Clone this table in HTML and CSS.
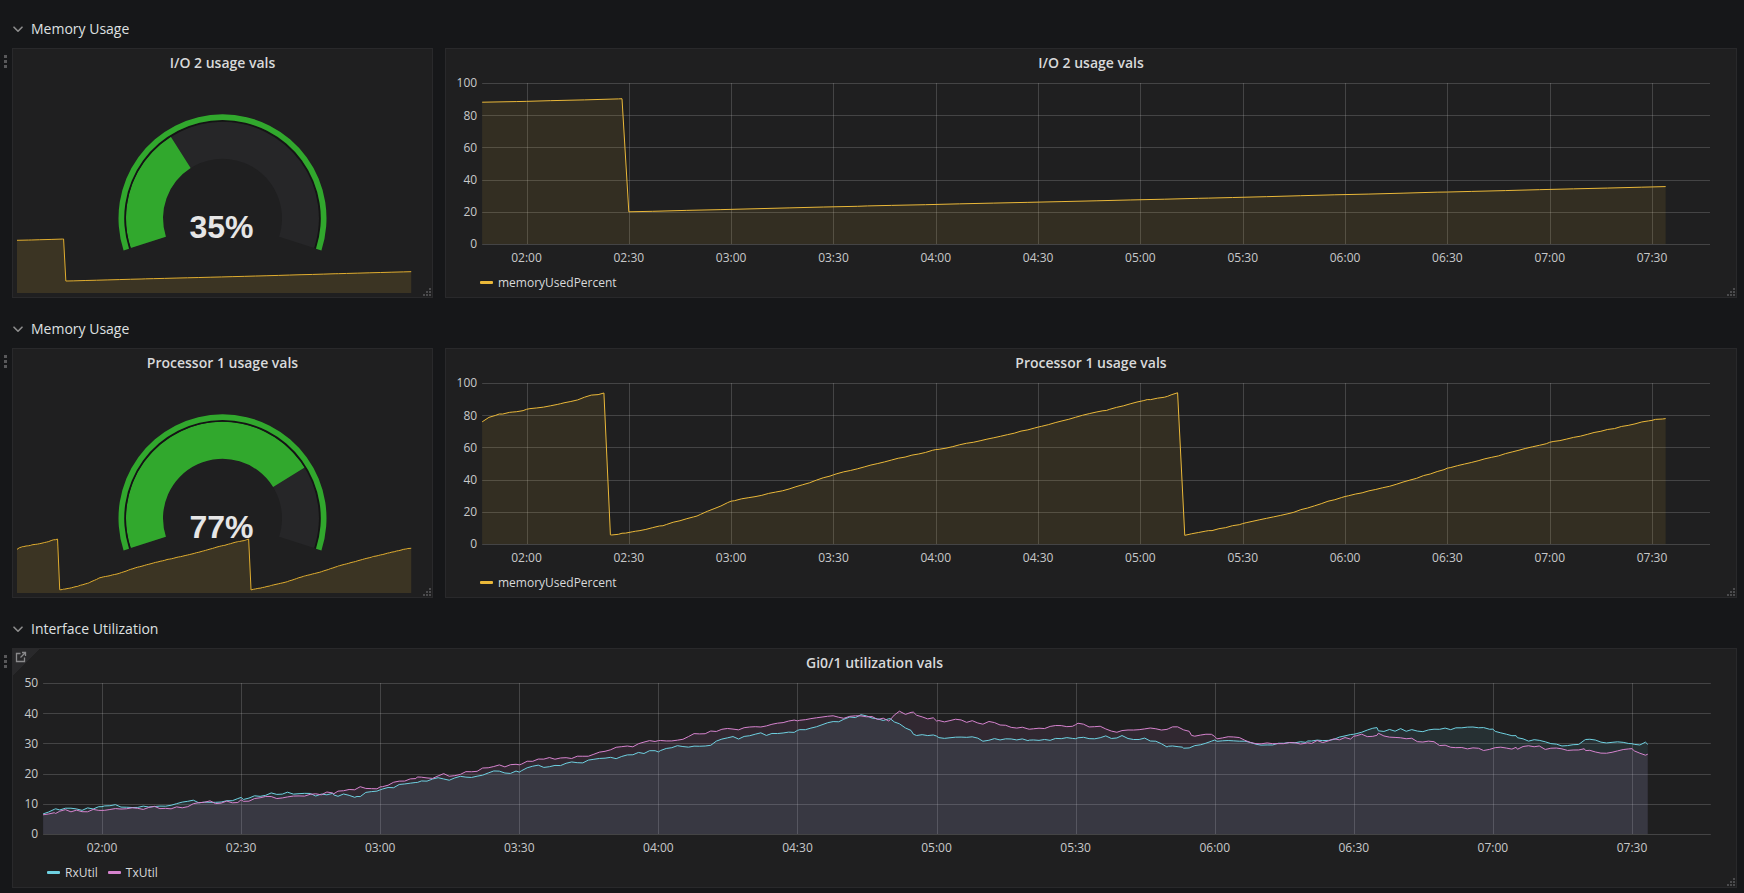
FILE: index.html
```html
<!DOCTYPE html>
<html lang="en">
<head>
<meta charset="utf-8">
<title>Dashboard</title>
<link rel="stylesheet" href="styles.css">
</head>
<body>
<main class="dash">
  <section class="row">
    <header class="row-head">
      <svg class="chev" viewBox="0 0 10 7" width="10" height="7"><path d="M1 1.2 L5 5.2 L9 1.2"/></svg>
      <span class="row-title">Memory Usage</span>
    </header>
    <div class="row-grid">
      <article class="panel stat">
        <span class="drag"><i></i><i></i><i></i></span>
        <h2 class="panel-title">I/O 2 usage vals</h2>
        <div class="stat-body">
          <svg class="spark" data-series="io"></svg>
          <svg class="gauge" data-value="0.35" data-label="35%"></svg>
        </div>
        <span class="resize"><svg viewBox="0 0 8 8" width="8" height="8"><rect x="6" y="0" width="2" height="2"/><rect x="3" y="3" width="2" height="2"/><rect x="6" y="3" width="2" height="2"/><rect x="0" y="6" width="2" height="2"/><rect x="3" y="6" width="2" height="2"/><rect x="6" y="6" width="2" height="2"/></svg></span>
      </article>
      <article class="panel graph">
        <h2 class="panel-title">I/O 2 usage vals</h2>
        <div class="plot-wrap"><svg class="plot" data-graph="io"></svg></div>
        <div class="legend">
          <span class="legend-item"><i class="swatch sw-yellow"></i>memoryUsedPercent</span>
        </div>
        <span class="resize"><svg viewBox="0 0 8 8" width="8" height="8"><rect x="6" y="0" width="2" height="2"/><rect x="3" y="3" width="2" height="2"/><rect x="6" y="3" width="2" height="2"/><rect x="0" y="6" width="2" height="2"/><rect x="3" y="6" width="2" height="2"/><rect x="6" y="6" width="2" height="2"/></svg></span>
      </article>
    </div>
  </section>

  <section class="row">
    <header class="row-head">
      <svg class="chev" viewBox="0 0 10 7" width="10" height="7"><path d="M1 1.2 L5 5.2 L9 1.2"/></svg>
      <span class="row-title">Memory Usage</span>
    </header>
    <div class="row-grid">
      <article class="panel stat">
        <span class="drag"><i></i><i></i><i></i></span>
        <h2 class="panel-title">Processor 1 usage vals</h2>
        <div class="stat-body">
          <svg class="spark" data-series="cpu"></svg>
          <svg class="gauge" data-value="0.77" data-label="77%"></svg>
        </div>
        <span class="resize"><svg viewBox="0 0 8 8" width="8" height="8"><rect x="6" y="0" width="2" height="2"/><rect x="3" y="3" width="2" height="2"/><rect x="6" y="3" width="2" height="2"/><rect x="0" y="6" width="2" height="2"/><rect x="3" y="6" width="2" height="2"/><rect x="6" y="6" width="2" height="2"/></svg></span>
      </article>
      <article class="panel graph">
        <h2 class="panel-title">Processor 1 usage vals</h2>
        <div class="plot-wrap"><svg class="plot" data-graph="cpu"></svg></div>
        <div class="legend">
          <span class="legend-item"><i class="swatch sw-yellow"></i>memoryUsedPercent</span>
        </div>
        <span class="resize"><svg viewBox="0 0 8 8" width="8" height="8"><rect x="6" y="0" width="2" height="2"/><rect x="3" y="3" width="2" height="2"/><rect x="6" y="3" width="2" height="2"/><rect x="0" y="6" width="2" height="2"/><rect x="3" y="6" width="2" height="2"/><rect x="6" y="6" width="2" height="2"/></svg></span>
      </article>
    </div>
  </section>

  <section class="row">
    <header class="row-head">
      <svg class="chev" viewBox="0 0 10 7" width="10" height="7"><path d="M1 1.2 L5 5.2 L9 1.2"/></svg>
      <span class="row-title">Interface Utilization</span>
    </header>
    <div class="row-wide">
      <article class="panel graph wide">
        <span class="drag"><i></i><i></i><i></i></span>
        <span class="corner">
          <svg class="ext" viewBox="0 0 12 12" width="12" height="12"><path d="M5.5 2.5 H1.5 V10.5 H9.5 V6.5"/><path d="M5.5 6.5 L10.5 1.5 M7 1.5 H10.5 V5"/></svg>
        </span>
        <h2 class="panel-title">Gi0/1 utilization vals</h2>
        <div class="plot-wrap"><svg class="plot" data-graph="net"></svg></div>
        <div class="legend">
          <span class="legend-item"><i class="swatch sw-cyan"></i>RxUtil</span>
          <span class="legend-item"><i class="swatch sw-pink"></i>TxUtil</span>
        </div>
        <span class="resize"><svg viewBox="0 0 8 8" width="8" height="8"><rect x="6" y="0" width="2" height="2"/><rect x="3" y="3" width="2" height="2"/><rect x="6" y="3" width="2" height="2"/><rect x="0" y="6" width="2" height="2"/><rect x="3" y="6" width="2" height="2"/><rect x="6" y="6" width="2" height="2"/></svg></span>
      </article>
    </div>
  </section>
</main>
<script src="script.js"></script>
</body>
</html>
```

FILE: styles.css
```css
* { box-sizing: border-box; margin: 0; padding: 0; }

html, body {
  background: #161719;
}

body {
  width: 1744px;
  height: 893px;
  overflow: hidden;
  font-family: "Open Sans", "Liberation Sans", sans-serif;
  color: #d8d9da;
}

.dash {
  display: flex;
  flex-direction: column;
  gap: 12px;
  padding: 10px 7px 0 12px;
}

.row-head {
  height: 38px;
  display: flex;
  align-items: center;
  gap: 8px;
  padding-left: 1px;
}

.chev {
  fill: none;
  stroke: #8e8e8e;
  stroke-width: 1.6;
  stroke-linecap: round;
  stroke-linejoin: round;
}

.row-title {
  font-size: 14px;
  color: #dfe0e1;
  line-height: 1;
}

.row-grid {
  display: grid;
  grid-template-columns: 421px 1fr;
  gap: 12px;
  height: 250px;
}

.row-wide {
  display: flex;
  height: 240px;
}

.panel {
  position: relative;
  display: flex;
  flex-direction: column;
  background: #1f1f20;
  border: 1px solid #29292b;
}

.row-wide .panel {
  flex: 1;
}

.panel-title {
  height: 20px;
  line-height: 28px;
  text-align: center;
  font-size: 14px;
  font-weight: 600;
  color: #d8d9da;
}

.stat-body {
  position: relative;
  flex: 1;
  margin-top: 8px;
}

.stat-body svg {
  position: absolute;
  left: 0;
  top: 0;
  width: 100%;
  height: 100%;
}

.plot-wrap {
  flex: none;
  height: 200px;
}

.wide .plot-wrap {
  height: 190px;
}

.plot {
  display: block;
  width: 100%;
  height: 100%;
}

.legend {
  height: 28px;
  padding: 0 0 2px 34px;
  display: flex;
  align-items: center;
  gap: 10px;
  font-size: 12px;
  color: #d8d9da;
}

.legend-item {
  display: flex;
  align-items: center;
  gap: 5px;
}

.swatch {
  display: block;
  width: 13px;
  height: 3px;
  border-radius: 1px;
}

.sw-yellow { background: #eab839; }
.sw-cyan { background: #6ed0e0; }
.sw-pink { background: #d683ce; }

.drag {
  position: absolute;
  left: -9px;
  top: 6px;
  display: flex;
  flex-direction: column;
  gap: 2px;
}

.drag i {
  display: block;
  width: 3px;
  height: 3px;
  background: #58585a;
}

.resize {
  position: absolute;
  right: 1px;
  bottom: 1px;
  width: 8px;
  height: 8px;
  display: flex;
}

.resize svg {
  fill: #4b4b4d;
}

.corner {
  position: absolute;
  left: 0;
  top: 0;
  width: 27px;
  height: 27px;
  background: linear-gradient(135deg, #29292b 50%, rgba(41, 41, 43, 0) 50%);
}

.ext {
  position: absolute;
  left: 2px;
  top: 2px;
  fill: none;
  stroke: #8a8a8c;
  stroke-width: 1.3;
}

.axis-label {
  font-family: "Open Sans", "Liberation Sans", sans-serif;
  font-size: 12px;
  fill: #c8c9ca;
}

.gauge-value {
  font-family: "Liberation Sans", Arial, sans-serif;
  font-weight: bold;
  font-size: 32px;
  fill: #e6e6e6;
}
```

FILE: script.js
```js
(function () {
  var NS = 'http://www.w3.org/2000/svg';

  function el(tag, attrs, parent) {
    var e = document.createElementNS(NS, tag);
    for (var k in attrs) e.setAttribute(k, attrs[k]);
    if (parent) parent.appendChild(e);
    return e;
  }

  function rng(seed) {
    var s = seed >>> 0;
    return function () {
      s = (Math.imul(s, 1664525) + 1013904223) >>> 0;
      return s / 4294967296;
    };
  }

  function interp(keys, t) {
    if (t <= keys[0][0]) return keys[0][1];
    for (var i = 1; i < keys.length; i++) {
      if (t <= keys[i][0]) {
        var t0 = keys[i - 1][0], v0 = keys[i - 1][1], t1 = keys[i][0], v1 = keys[i][1];
        return v0 + (v1 - v0) * (t - t0) / (t1 - t0);
      }
    }
    return keys[keys.length - 1][1];
  }

  function sample(keys, step, amp, ar, seed) {
    var r = rng(seed);
    var a = keys[0][0], b = keys[keys.length - 1][0];
    var ts = [];
    for (var t = a; t < b; t += step) ts.push(+t.toFixed(3));
    keys.forEach(function (k) { ts.push(k[0]); });
    ts.sort(function (x, y) { return x - y; });
    var uniq = ts.filter(function (t, i) { return i === 0 || Math.abs(t - ts[i - 1]) > 0.2; });
    var n = 0;
    return uniq.map(function (t) {
      n = ar * n + (r() - 0.5) * amp;
      return [t, interp(keys, t) + n];
    });
  }

  var IO = [[-13, 88.1], [0, 88.6], [28, 90.2], [30, 20], [100, 23.6], [200, 28.5], [270, 32.3], [334, 35.6]];
  var CPU = [[-13, 76], [-11, 78.5], [-8, 80.5], [-4, 82], [0, 83.5], [5, 85], [10, 87], [15, 89.5], [19, 92.5],
    [21, 92.8], [22.7, 94], [24.6, 5.5], [28, 6.5], [32, 8], [40, 11.5], [50, 17.5], [60, 26.5], [75, 33],
    [90, 43], [105, 51], [120, 58.5], [135, 65], [150, 72.5], [163, 80], [170, 83], [175, 86], [182, 89.5],
    [188, 91.5], [190.9, 94], [193, 5.5], [200, 8], [210, 12.5], [225, 20], [240, 29.5], [255, 37], [270, 47],
    [285, 55], [300, 63], [315, 70], [330, 77], [334, 78]];
  var RX = [[-12.7, 7], [-10, 7.8], [0, 8.9], [15, 9.5], [30, 11.9], [40, 13.8], [45, 13], [50, 13], [55, 12.6],
    [60, 14.8], [68, 17.5], [75, 18.2], [90, 21.2], [105, 24], [120, 27.8], [135, 31.1], [150, 34.4], [160, 37.7],
    [165, 39.4], [170, 37.7], [172, 36], [175, 33.3], [180, 31.9], [190, 31.1], [200, 31], [210, 31.7], [220, 32.2],
    [225, 31.5], [230, 28.9], [233, 28.4], [240, 30.6], [250, 30], [260, 31], [270, 32.5], [275, 34.4], [285, 34.4],
    [292, 34.7], [298, 35.8], [300, 34.4], [305, 32.2], [310, 30.5], [315, 29.1], [320, 30.9], [330, 30.2], [333.4, 30]];
  var TX = [[-12.7, 6.7], [-10, 7.5], [0, 8.1], [15, 9], [30, 11.1], [40, 12.2], [50, 14.1], [60, 15.9], [68, 18.9],
    [75, 19.5], [90, 23.4], [105, 26.2], [120, 31.1], [135, 34.4], [150, 37.7], [160, 38.9], [165, 39], [170, 37.7],
    [172, 40], [175, 39.7], [180, 37.7], [190, 37.2], [200, 35.3], [210, 36.1], [220, 34.4], [230, 34.4], [232, 35.8],
    [235, 33], [240, 32.2], [250, 30], [260, 30], [270, 32], [275, 32.9], [285, 30.6], [292, 28], [298, 28.1],
    [305, 28.4], [310, 28.9], [315, 27.3], [320, 27.6], [330, 27.5], [333.4, 26.2]];

  var DATA = {
    io: sample(IO, 10, 0.12, 0, 1),
    cpu: sample(CPU, 2, 0.5, 0.3, 7),
    rx: sample(RX, 1.2, 1.3, 0.4, 3),
    tx: sample(TX, 1.2, 1.3, 0.4, 11)
  };

  /* svg starts 8px above the old origin, so every vertical coordinate is +8 */
  var GRAPHS = {
    io: { series: [['io', '#eab839']], x02: 80.5, ppm: 102.32 / 30, t0: -13, t1: 347, top: 14, bottom: 175, ymax: 100, ystep: 20, labelY: 189 },
    cpu: { series: [['cpu', '#eab839']], x02: 80.5, ppm: 102.32 / 30, t0: -13, t1: 347, top: 14, bottom: 175, ymax: 100, ystep: 20, labelY: 189 },
    net: { series: [['rx', '#6ed0e0'], ['tx', '#d683ce']], x02: 89, ppm: 139.09 / 30, t0: -12.7, t1: 347, top: 14, bottom: 165, ymax: 50, ystep: 10, labelY: 179 }
  };

  function pad(n) { return (n < 10 ? '0' : '') + n; }
  function f(n) { return n.toFixed(2); }

  function sizeOf(svg) {
    var r = svg.getBoundingClientRect();
    svg.setAttribute('viewBox', '0 0 ' + r.width + ' ' + r.height);
    return r;
  }

  function drawGraph(svg, cfg) {
    sizeOf(svg);
    var X = function (t) { return cfg.x02 + t * cfg.ppm; };
    var Y = function (v) { return cfg.bottom - (v / cfg.ymax) * (cfg.bottom - cfg.top); };
    var L = X(cfg.t0), R = X(cfg.t1);
    var grid = el('g', { stroke: 'rgba(200,200,200,0.22)', 'stroke-width': 1, fill: 'none' }, svg);
    var labels = el('g', { class: 'axis-label' }, svg);
    for (var v = 0; v <= cfg.ymax; v += cfg.ystep) {
      var y = Math.round(Y(v)) + 0.5;
      el('line', { x1: f(L), x2: f(R), y1: y, y2: y }, grid);
      var tx = el('text', { x: f(L - 5), y: f(Y(v) + 4.3), 'text-anchor': 'end' }, labels);
      tx.textContent = String(v);
    }
    for (var t = 0; t <= 330; t += 30) {
      var x = Math.round(X(t)) + 0.5;
      el('line', { x1: x, x2: x, y1: cfg.top, y2: cfg.bottom }, grid);
      var lt = el('text', { x: f(X(t)), y: f(cfg.labelY + 4.3), 'text-anchor': 'middle' }, labels);
      lt.textContent = pad(2 + Math.floor(t / 60)) + ':' + pad(t % 60);
    }
    cfg.series.forEach(function (s) {
      var pts = DATA[s[0]];
      var line = pts.map(function (p, i) { return (i ? 'L' : 'M') + f(X(p[0])) + ' ' + f(Y(p[1])); }).join(' ');
      var area = 'M' + f(X(pts[0][0])) + ' ' + cfg.bottom + ' ' + line.replace(/^M/, 'L') +
        ' L' + f(X(pts[pts.length - 1][0])) + ' ' + cfg.bottom + ' Z';
      el('path', { d: area, fill: s[1], 'fill-opacity': 0.1, stroke: 'none' }, svg);
      s.line = line;
    });
    cfg.series.forEach(function (s) {
      el('path', { d: s.line, fill: 'none', stroke: s[1], 'stroke-width': 1, 'stroke-linejoin': 'round' }, svg);
    });
  }

  function drawSpark(svg, key) {
    sizeOf(svg);
    var pts = DATA[key];
    var vmax = Math.max.apply(null, pts.map(function (p) { return p[1]; }));
    var X = function (t) { return 4 + (t + 13) / 360 * 409; };
    var Y = function (v) { return 216 - v / vmax * 54; };
    var line = pts.map(function (p, i) { return (i ? 'L' : 'M') + f(X(p[0])) + ' ' + f(Y(p[1])); }).join(' ');
    var area = 'M' + f(X(pts[0][0])) + ' 216 ' + line.replace(/^M/, 'L') + ' L' + f(X(pts[pts.length - 1][0])) + ' 216 Z';
    el('path', { d: area, fill: 'rgba(234,184,57,0.14)' }, svg);
    el('path', { d: line, fill: 'none', stroke: '#e0ad2f', 'stroke-width': 1 }, svg);
  }

  function P(cx, cy, r, a) {
    var rad = a * Math.PI / 180;
    return f(cx + r * Math.cos(rad)) + ' ' + f(cy - r * Math.sin(rad));
  }

  function band(cx, cy, r0, r1, a0, a1) {
    var large = (a0 - a1) > 180 ? 1 : 0;
    return 'M' + P(cx, cy, r1, a0) + ' A' + r1 + ' ' + r1 + ' 0 ' + large + ' 1 ' + P(cx, cy, r1, a1) +
      ' L' + P(cx, cy, r0, a1) + ' A' + r0 + ' ' + r0 + ' 0 ' + large + ' 0 ' + P(cx, cy, r0, a0) + ' Z';
  }

  function arc(cx, cy, r, a0, a1) {
    var large = (a0 - a1) > 180 ? 1 : 0;
    return 'M' + P(cx, cy, r, a0) + ' A' + r + ' ' + r + ' 0 ' + large + ' 1 ' + P(cx, cy, r, a1);
  }

  function drawGauge(svg) {
    sizeOf(svg);
    var v = parseFloat(svg.getAttribute('data-value'));
    var cx = 209.5, cy = 141.3, green = 'rgba(50,172,45,0.97)';
    var a0 = 198, a1 = -18, av = a0 - 216 * v;
    el('path', { d: band(cx, cy, 59.5, 96.5, a0, a1), fill: '#262628' }, svg);
    el('path', { d: band(cx, cy, 59.5, 96.5, a0, av), fill: green }, svg);
    el('path', { d: arc(cx, cy, 97.4, a0, a1), fill: 'none', stroke: '#141414', 'stroke-width': 1.8 }, svg);
    el('path', { d: band(cx, cy, 98.3, 104, a0, a1), fill: green }, svg);
    var t = el('text', { x: 208.5, y: 161, 'text-anchor': 'middle', class: 'gauge-value' }, svg);
    t.textContent = svg.getAttribute('data-label');
  }

  document.querySelectorAll('svg[data-graph]').forEach(function (s) { drawGraph(s, GRAPHS[s.getAttribute('data-graph')]); });
  document.querySelectorAll('svg.spark').forEach(function (s) { drawSpark(s, s.getAttribute('data-series')); });
  document.querySelectorAll('svg.gauge').forEach(drawGauge);
})();
```
